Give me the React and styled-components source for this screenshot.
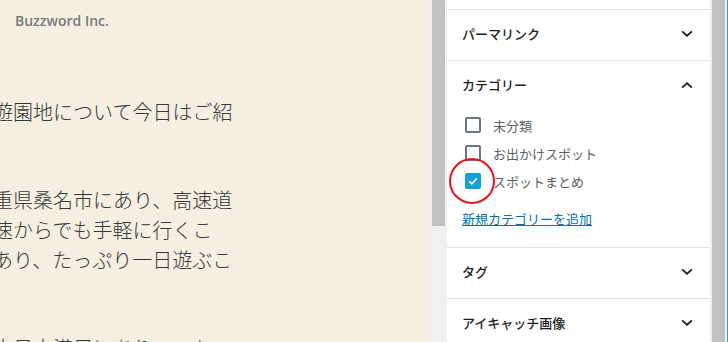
import React from 'react';
import styled, { createGlobalStyle } from 'styled-components';

const GlobalStyle = createGlobalStyle`
  html, body {
    margin: 0;
    padding: 0;
    background: #ffffff;
  }
  body {
    font-family: "Noto Sans CJK JP", "Noto Sans", sans-serif;
  }
`;

const Screen = styled.div`
  display: flex;
  flex-direction: row;
  width: 728px;
  height: 342px;
  overflow: hidden;
  border-right: 1px solid #2e9fd4;
  box-sizing: border-box;
`;

const Editor = styled.div`
  flex: 0 0 430px;
  background: #f4efe1;
  overflow: hidden;
`;

const Brand = styled.div`
  padding: 12px 15px 0;
  height: 18px;
  line-height: 18px;
  font-family: "Open Sans", "Noto Sans", sans-serif;
  font-weight: 600;
  font-size: 14px;
  color: #787878;
`;

const Content = styled.div`
  margin: 67px 0 0 -7px;
  width: 300px;
`;

const Paragraph = styled.p`
  margin: 0 0 58px;
  font-size: 20px;
  line-height: 30px;
  color: #383838;
  white-space: nowrap;
  font-family: "Noto Sans CJK JP", sans-serif;
  font-weight: 300;
`;

const Track = styled.div`
  flex: 0 0 17px;
  background: #f0f0f0;
  display: flex;
  flex-direction: column;
  align-items: center;
`;

const Thumb = styled.div`
  width: 13px;
  height: ${p => p.$height};
  background: #c1c1c1;
`;

const Sidebar = styled.div`
  flex: 0 0 263px;
  background: #ffffff;
  display: flex;
  flex-direction: column;
  overflow: hidden;
  & > * {
    flex-shrink: 0;
  }
`;

const TopGap = styled.div`
  height: 9px;
  border-bottom: 1px solid #e2e4e7;
`;

const Panel = styled.section`
  border-bottom: 1px solid #e2e4e7;
`;

const PanelHeader = styled.div`
  box-sizing: border-box;
  height: 50px;
  display: flex;
  align-items: center;
  justify-content: space-between;
  padding: 0 11px 3px 15px;
  font-size: 13px;
  font-weight: 500;
  color: #1e1e1e;
`;

const Chevron = styled.svg`
  width: 24px;
  height: 24px;
  fill: #1e1e1e;
  transform: ${p => (p.$up ? 'rotate(180deg)' : 'none')};
`;

const PanelBody = styled.div`
  padding: 0 16px 18px 18px;
`;

const CheckList = styled.ul`
  list-style: none;
  margin: 0;
  padding: 0;
`;

const CheckRow = styled.li`
  position: relative;
  height: 28px;
  display: flex;
  align-items: center;
  gap: 12px;
  font-size: 13px;
  color: #5b6168;
`;

const Box = styled.span`
  width: 16px;
  height: 16px;
  box-sizing: border-box;
  border-radius: 2px;
  border: ${p => (p.$checked ? 'none' : '2px solid #6c7781')};
  background: ${p => (p.$checked ? '#14a0d6' : '#ffffff')};
  display: flex;
  align-items: center;
  justify-content: center;
`;

const Highlight = styled.span`
  position: absolute;
  left: -16px;
  top: -9px;
  width: 46px;
  height: 46px;
  box-sizing: border-box;
  border: 2px solid #e8141b;
  border-radius: 50%;
`;

const AddLink = styled.a`
  display: block;
  margin: 14px 0 0 -3px;
  line-height: 20px;
  font-size: 13px;
  color: #0073aa;
  text-decoration: underline;
`;

const ChevronIcon = ({ up }) => (
  <Chevron $up={up} viewBox="0 0 24 24">
    <path d="M17.5 10.1 12 15l-5.5-4.9 1.2-1.3L12 12.6l4.3-3.8z" />
  </Chevron>
);

const Check = () => (
  <svg width="12" height="12" viewBox="0 0 12 12">
    <path d="M2.2 6.3l2.6 2.5 5-5.3" fill="none" stroke="#ffffff" strokeWidth="1.8" />
  </svg>
);

const categories = [
  { name: '未分類', checked: false },
  { name: 'お出かけスポット', checked: false },
  { name: 'スポットまとめ', checked: true },
];

const App = () => (
  <>
    <GlobalStyle />
    <Screen>
      <Editor>
        <Brand>Buzzword Inc.</Brand>
        <Content>
          <Paragraph>遊園地について今日はご紹</Paragraph>
          <Paragraph>
            重県桑名市にあり、高速道
            <br />
            速からでも手軽に行くこ
            <br />
            あり、たっぷり一日遊ぶこ
          </Paragraph>
          <Paragraph>大日本満足にあり、ユト</Paragraph>
        </Content>
      </Editor>
      <Track>
        <Thumb $height="226px" />
      </Track>
      <Sidebar>
        <TopGap />
        <Panel>
          <PanelHeader>
            パーマリンク
            <ChevronIcon />
          </PanelHeader>
        </Panel>
        <Panel>
          <PanelHeader>
            カテゴリー
            <ChevronIcon up />
          </PanelHeader>
          <PanelBody>
            <CheckList>
              {categories.map(cat => (
                <CheckRow key={cat.name}>
                  <Box $checked={cat.checked}>{cat.checked && <Check />}</Box>
                  {cat.name}
                  {cat.checked && <Highlight />}
                </CheckRow>
              ))}
            </CheckList>
            <AddLink href="#">新規カテゴリーを追加</AddLink>
          </PanelBody>
        </Panel>
        <Panel>
          <PanelHeader>
            タグ
            <ChevronIcon />
          </PanelHeader>
        </Panel>
        <Panel>
          <PanelHeader>
            アイキャッチ画像
            <ChevronIcon />
          </PanelHeader>
        </Panel>
      </Sidebar>
      <Track>
        <Thumb $height="342px" />
      </Track>
    </Screen>
  </>
);

export default App;
